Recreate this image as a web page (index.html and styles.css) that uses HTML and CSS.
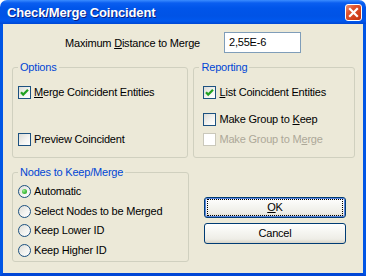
FILE: index.html
```html
<!DOCTYPE html>
<html>
<head>
<meta charset="utf-8">
<link rel="stylesheet" href="styles.css">
</head>
<body>
<div class="window">
  <div class="titlebar">
    <span class="title">Check/Merge Coincident</span>
    <span class="close">
      <svg width="17" height="17" viewBox="0 0 17 17">
        <defs>
          <linearGradient id="cg" x1="0" y1="0" x2="1" y2="1">
            <stop offset="0" stop-color="#F09A7E"/>
            <stop offset="0.35" stop-color="#E0532E"/>
            <stop offset="1" stop-color="#C1300C"/>
          </linearGradient>
        </defs>
        <rect x="0.5" y="0.5" width="16" height="16" rx="2.5" fill="url(#cg)" stroke="#FFFFFF"/>
        <path d="M5 5 L12 12 M12 5 L5 12" stroke="#FFFFFF" stroke-width="2.2" stroke-linecap="square"/>
      </svg>
    </span>
  </div>
  <div class="client">
    <div class="dist-row">
      <label class="dist-label">Maximum <u>D</u>istance to Merge</label>
      <div class="textbox">2,55E-6</div>
    </div>
    <div class="groups">
      <fieldset class="group group-options">
        <legend>Options</legend>
        <div class="opt checked"><span class="cb"><svg width="11" height="11" viewBox="0 0 11 11"><path d="M2 5.2 L4.2 7.6 L9 2.8" fill="none" stroke="#21A121" stroke-width="2.2"/></svg></span><span><u>M</u>erge Coincident Entities</span></div>
        <div class="opt opt-preview"><span class="cb"></span><span>Preview Coincident</span></div>
      </fieldset>
      <fieldset class="group group-reporting">
        <legend>Reporting</legend>
        <div class="opt checked"><span class="cb"><svg width="11" height="11" viewBox="0 0 11 11"><path d="M2 5.2 L4.2 7.6 L9 2.8" fill="none" stroke="#21A121" stroke-width="2.2"/></svg></span><span><u>L</u>ist Coincident Entities</span></div>
        <div class="opt opt-keep"><span class="cb"></span><span>Make Group to <u>K</u>eep</span></div>
        <div class="opt opt-merge disabled"><span class="cb"></span><span>Make Group to M<u>e</u>rge</span></div>
      </fieldset>
    </div>
    <div class="bottom">
      <fieldset class="group group-nodes">
        <legend>Nodes to Keep/Merge</legend>
        <div class="radios">
          <div class="opt"><span class="rb on"></span><span>Automatic</span></div>
          <div class="opt"><span class="rb"></span><span>Select Nodes to be Merged</span></div>
          <div class="opt"><span class="rb"></span><span>Keep Lower ID</span></div>
          <div class="opt"><span class="rb"></span><span>Keep Higher ID</span></div>
        </div>
      </fieldset>
      <div class="buttons">
        <div class="btn btn-default"><span><u>O</u>K</span></div>
        <div class="btn">Cancel</div>
      </div>
    </div>
  </div>
</div>
</body>
</html>
```

FILE: styles.css
```css
html, body {
  margin: 0;
  padding: 0;
  background: #ffffff;
}
.window {
  width: 366px;
  height: 276px;
  box-sizing: border-box;
  display: flex;
  flex-direction: column;
  font-family: "Liberation Sans", Arial, sans-serif;
  font-size: 11px;
  letter-spacing: -0.2px;
  color: #000000;
}
.titlebar {
  height: 24px;
  flex: none;
  box-sizing: border-box;
  display: flex;
  align-items: center;
  justify-content: space-between;
  padding: 0 4px 0 7px;
  border-radius: 7px 7px 0 0;
  background: linear-gradient(#3B8CFF 0px, #0A5EF0 3px, #0055EA 8px, #0053E6 16px, #0058EE 21px, #0047D4 24px);
}
.title {
  color: #ffffff;
  font-weight: bold;
  font-size: 13px;
  letter-spacing: -0.15px;
  text-shadow: 1px 1px 0 #0A1E80;
  padding-top: 1px;
}
.close {
  display: flex;
  width: 17px;
  height: 17px;
  margin-top: 1px;
}
.client {
  flex: 1;
  background: #ECE9D8;
  border-left: 3px solid #0055E5;
  border-right: 3px solid #0055E5;
  border-bottom: 3px solid #0046D6;
  padding: 0 8px 0 9px;
  display: flex;
  flex-direction: column;
}
.dist-row {
  display: flex;
  align-items: center;
  margin-top: 8px;
  padding-left: 53px;
  height: 21px;
}
.dist-label {
  width: 159px;
}
.textbox {
  width: 77px;
  height: 21px;
  box-sizing: border-box;
  border: 1px solid #7F9DB9;
  background: #ffffff;
  padding: 3px 4px;
  line-height: 13px;
}
.groups {
  display: flex;
  gap: 5px;
  margin-top: 8px;
}
.group {
  margin: 0;
  padding: 0 5px;
  border: 1px solid #D0D0BF;
  border-radius: 3px;
  box-sizing: border-box;
  min-width: 0;
  height: 97px;
}
.group legend {
  color: #0046D5;
  padding: 0 2px;
  line-height: 13px;
  margin-left: 0;
}
.group-options {
  width: 177px;
  padding-top: 12px;
}
.group-reporting {
  width: 162px;
  padding-top: 12px;
}
.group-reporting .opt {
  margin-left: 4px;
}
.opt {
  display: flex;
  align-items: center;
  height: 13px;
  line-height: 13px;
  gap: 3px;
  white-space: nowrap;
}
.opt-preview {
  margin-top: 34px;
}
.opt-keep {
  margin-top: 14px;
}
.opt-merge {
  margin-top: 7px;
}
.cb {
  width: 13px;
  height: 13px;
  box-sizing: border-box;
  border: 1px solid #1C5180;
  background: linear-gradient(135deg, #DCDCD7 0%, #F5F5F3 60%, #FFFFFF 100%);
  display: flex;
  flex: none;
}
.disabled {
  color: #ACA899;
}
.disabled .cb {
  border-color: #CAC8BB;
  background: #FFFFFF;
}
.bottom {
  display: flex;
  margin-top: 8px;
}
.group-nodes {
  width: 177px;
  height: 96px;
  padding-top: 6px;
}
.radios {
  display: flex;
  flex-direction: column;
  gap: 6.5px;
}
.rb {
  width: 13px;
  height: 13px;
  box-sizing: border-box;
  border-radius: 50%;
  border: 1px solid #1C5180;
  background: linear-gradient(135deg, #DCDCD7 0%, #F3F3F0 55%, #FFFFFF 100%);
  display: flex;
  align-items: center;
  justify-content: center;
  flex: none;
}
.rb.on::after {
  content: "";
  width: 5px;
  height: 5px;
  border-radius: 50%;
  background: radial-gradient(circle at 35% 35%, #A0EB9A 0%, #4DC448 45%, #21A121 100%);
}
.buttons {
  display: flex;
  flex-direction: column;
  gap: 5px;
  margin-left: 15px;
  margin-top: 31px;
}
.btn {
  width: 142px;
  height: 21px;
  box-sizing: border-box;
  border: 1px solid #003C74;
  border-radius: 3px;
  background: linear-gradient(#FFFFFF 0%, #F6F6F2 40%, #EEEDE6 80%, #D8D4C8 100%);
  display: flex;
  align-items: center;
  justify-content: center;
  line-height: 13px;
}
.btn-default {
  box-shadow: inset 0 0 0 1px #5A86E0;
}
.btn-default span {
  outline: 1px dotted #000000;
  outline-offset: 0;
  display: flex;
  align-items: center;
  justify-content: center;
  width: 134px;
  height: 15px;
}
u {
  text-decoration: underline;
  text-underline-offset: 1px;
}
```
